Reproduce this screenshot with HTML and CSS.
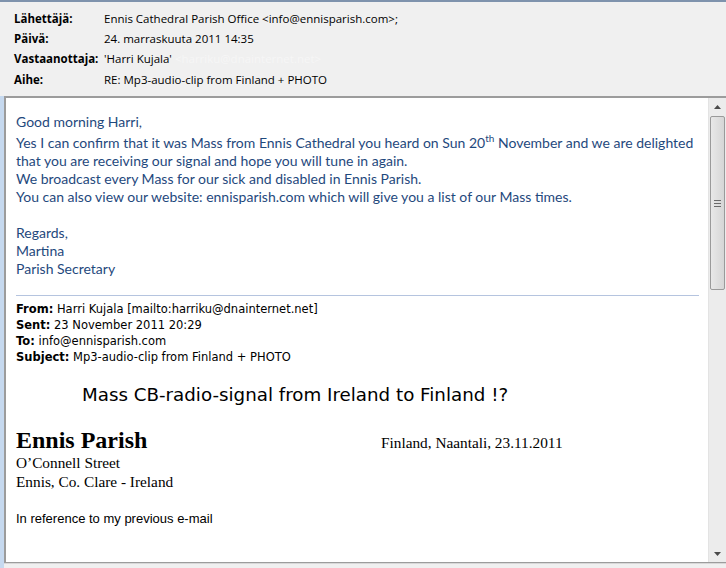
FILE: index.html
```html
<!DOCTYPE html>
<html lang="fi">
<head>
    <meta charset="UTF-8">
    <meta name="viewport" content="width=device-width, initial-scale=1.0">
    <title>RE: Mp3-audio-clip from Finland + PHOTO</title>
    <link rel="stylesheet" href="styles.css">
</head>
<body>
<div class="window">
    <div class="header">
        <div class="field">
            <div class="label">Lähettäjä:</div>
            <div class="value">Ennis Cathedral Parish Office &lt;info@ennisparish.com&gt;;</div>
        </div>
        <div class="field">
            <div class="label">Päivä:</div>
            <div class="value">24. marraskuuta 2011 14:35</div>
        </div>
        <div class="field">
            <div class="label">Vastaanottaja:</div>
            <div class="value">'Harri Kujala' <span class="blur">&lt;harriku@dnainternet.net&gt;</span></div>
        </div>
        <div class="field">
            <div class="label">Aihe:</div>
            <div class="value">RE: Mp3-audio-clip from Finland + PHOTO</div>
        </div>
    </div>

    <div class="message">
        <div class="body">
            <div class="reply">
                <p class="greet">Good morning Harri,</p>
                <p>Yes I can confirm that it was Mass from Ennis Cathedral you heard on Sun 20<sup>th</sup> November and we are delighted that you are receiving our signal and hope you will tune in again.<br>
                We broadcast every Mass for our sick and disabled in Ennis Parish.<br>
                You can also view our website: ennisparish.com which will give you a list of our Mass times.</p>
                <p>Regards,<br>Martina<br>Parish Secretary</p>
            </div>

            <div class="quoted">
                <div><b>From:</b> Harri Kujala [mailto:harriku@dnainternet.net]</div>
                <div><b>Sent:</b> 23 November 2011 20:29</div>
                <div><b>To:</b> info@ennisparish.com</div>
                <div><b>Subject:</b> Mp3-audio-clip from Finland + PHOTO</div>
            </div>

            <div class="title">Mass CB-radio-signal from Ireland to Finland !?</div>

            <div class="letter">
                <div class="address">
                    <div class="org">Ennis Parish</div>
                    <div>O’Connell Street</div>
                    <div>Ennis, Co. Clare - Ireland</div>
                </div>
                <div class="place">Finland, Naantali, 23.11.2011</div>
            </div>

            <p class="ref">In reference to my previous e-mail</p>
        </div>

        <div class="scrollbar">
            <div class="arrow">
                <svg width="7" height="4" viewBox="0 0 7 4"><path d="M3.5 0 L7 4 L0 4 Z" fill="#4a4a4a"/></svg>
            </div>
            <div class="track">
                <div class="thumb">
                    <svg width="7" height="7" viewBox="0 0 7 7"><path d="M0 0.5H7M0 3.5H7M0 6.5H7" stroke="#6b6b6b" stroke-width="1"/></svg>
                </div>
            </div>
            <div class="arrow">
                <svg width="7" height="4" viewBox="0 0 7 4"><path d="M0 0 L7 0 L3.5 4 Z" fill="#4a4a4a"/></svg>
            </div>
        </div>
    </div>
    <div class="bottom"></div>
</div>
</body>
</html>
```

FILE: styles.css
```css
*{
    box-sizing: border-box;
}
body{
    margin: 0;
    background-color: #fff;
}
.window{
    width: 726px;
    height: 568px;
    display: flex;
    flex-direction: column;
    background-color: #c6d9ef;
    border-top: 2px solid #7f93ad;
}

/* header fields */
.header{
    height: 94px;
    background-color: #f0f0f0;
    padding: 6px 0 0 14px;
    font-family: "Open Sans", "DejaVu Sans", sans-serif;
    font-size: 11.5px;
    color: #000;
}
.field{
    display: flex;
    height: 20.4px;
    align-items: center;
}
.label{
    width: 90px;
    font-weight: bold;
}
.value{
    white-space: nowrap;
}
.blur{
    color: #f6f6f6;
}

/* message area */
.message{
    flex: 1;
    margin-left: 4px;
    display: flex;
    background-color: #fff;
    border-top: 2px solid #9c9c9c;
    border-left: 2px solid #9c9c9c;
    border-bottom: 1px solid #9c9c9c;
    overflow: hidden;
}
.body{
    flex: 1;
    padding: 15px 0 0 10px;
}
p{
    margin: 0;
}
.reply{
    font-family: "Lato", "Open Sans", sans-serif;
    font-size: 14px;
    line-height: 18px;
    color: #1f497d;
    padding-right: 6px;
}
.reply p{
    margin-bottom: 18px;
}
.reply .greet{
    margin-bottom: 3px;
}
.reply p:last-child{
    margin-bottom: 0;
}
sup{
    font-size: 10px;
    line-height: 0;
    vertical-align: 6px;
}

.quoted{
    margin: 17px 9px 0 0;
    border-top: 1px solid #b5c4df;
    padding-top: 5px;
    font-family: "DejaVu Sans", sans-serif;
    font-size: 11.5px;
    line-height: 16px;
    color: #000;
}

.title{
    margin: 19px 0 0 66px;
    font-family: "DejaVu Sans", sans-serif;
    font-size: 18.25px;
    color: #000;
}

.letter{
    margin-top: 22px;
    display: flex;
    font-family: "Liberation Serif", serif;
    font-size: 15.3px;
    line-height: 19px;
    color: #000;
}
.address{
    width: 365px;
}
.org{
    font-size: 24px;
    font-weight: bold;
    line-height: 26px;
}
.place{
    padding-top: 6px;
}

.ref{
    margin-top: 20px;
    font-family: "Liberation Sans", sans-serif;
    font-size: 13px;
    color: #000;
}

/* scrollbar */
.scrollbar{
    width: 18px;
    display: flex;
    flex-direction: column;
    background-color: #ececec;
    border-left: 1px solid #e3e3e3;
}
.arrow{
    height: 17px;
    display: flex;
    align-items: center;
    justify-content: center;
}
.track{
    flex: 1;
}
.thumb{
    height: 174px;
    margin: 1px 1px 0;
    border: 1px solid #9a9a9a;
    border-radius: 2px;
    background: linear-gradient(to right, #e8e8e8, #d6d6d6);
    display: flex;
    align-items: center;
    justify-content: center;
}

.bottom{
    height: 5px;
    margin-left: 4px;
    background-color: #f0f0f0;
    border-top: 1px solid #d8d8d8;
}
```
